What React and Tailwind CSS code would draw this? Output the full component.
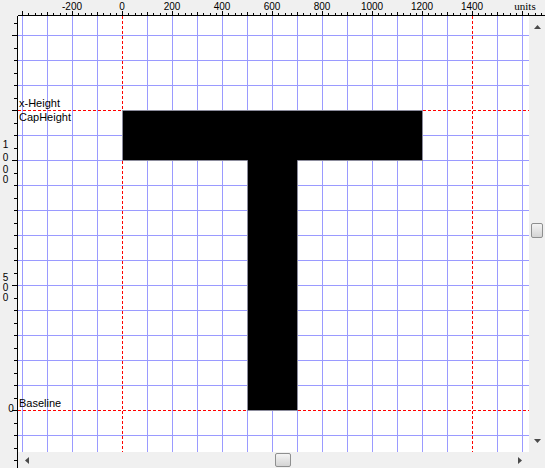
import React from 'react';

const GRID = '#9a9aff';
const RED = '#ff0000';

// units -> local px (canvas origin at page 18,16)
const ux = (u) => 104 + u / 4;
const uy = (u) => 394 - u / 4;

function TopRuler() {
    const ticks = [];
    for (let u = -400; u <= 1700; u += 25) {
        const x = Math.round(ux(u));
        if (x < 0 || x > 527) continue;
        const h = u % 200 === 0 ? 4 : u % 100 === 0 ? 3 : 2;
        ticks.push(<line key={u} x1={x + 0.5} x2={x + 0.5} y1={15} y2={15 - h} stroke="#000" />);
    }
    const labels = [];
    for (let u = -200; u <= 1400; u += 200) {
        labels.push(
            <text key={u} x={ux(u)} y={10} textAnchor="middle" fontSize="10" fontFamily="'Liberation Sans', Arial, sans-serif" fill="#000">
                {u}
            </text>
        );
    }
    return (
        <svg width="527" height="16" className="block">
            <line x1="0" x2="527" y1="15.5" y2="15.5" stroke="#000" />
            {ticks}
            {labels}
            <text x="507" y="10" textAnchor="middle" fontSize="11" fontFamily="'Liberation Serif', 'Times New Roman', serif" fill="#000">units</text>
        </svg>
    );
}

function LeftRuler() {
    const ticks = [];
    for (let k = -6; k <= 32; k++) {
        const u = k * 50;
        const y = Math.round(uy(u));
        if (y < 0 || y > 452) continue;
        const long = u % 500 === 0 || u === 1200;
        ticks.push(<line key={k} x1={long ? 12 : 14} x2={17} y1={y + 0.5} y2={y + 0.5} stroke="#000" />);
    }
    const digit = (ch, x, y, key) => (
        <text key={key} x={x} y={y} textAnchor="middle" fontSize="10" fontFamily="'Liberation Sans', Arial, sans-serif" fill="#000">{ch}</text>
    );
    return (
        <svg width="18" height="452" className="block">
            <line x1="17.5" x2="17.5" y1="0" y2="452" stroke="#000" />
            {ticks}
            {digit('1', 5.5, 131.5, 'a')}
            {digit('0', 5.5, 144.5, 'b')}
            {digit('0', 5.5, 156.5, 'c')}
            {digit('0', 5.5, 167, 'd')}
            {digit('5', 5.5, 264.5, 'e')}
            {digit('0', 5.5, 274.5, 'f')}
            {digit('0', 5.5, 284.5, 'g')}
            {digit('0', 11, 396, 'h')}
        </svg>
    );
}

function GlyphCanvas() {
    const vlines = [];
    for (let k = 0; k <= 20; k++) {
        const x = 4 + 25 * k;
        if (x === 104 || x === 454) continue;
        vlines.push(<line key={'v' + k} x1={x + 0.5} x2={x + 0.5} y1="0" y2="436" stroke={GRID} />);
    }
    const hlines = [];
    for (let k = 0; k <= 16; k++) {
        const y = 19 + 25 * k;
        if (y === 94 || y === 394) continue;
        hlines.push(<line key={'h' + k} x1="0" x2="511" y1={y + 0.5} y2={y + 0.5} stroke={GRID} />);
    }
    const label = { fontSize: 11, fontFamily: "'Liberation Sans', Arial, sans-serif", fill: '#000' };
    return (
        <svg width="511" height="436" className="block bg-white">
            {vlines}
            {hlines}
            <line x1="104.5" x2="104.5" y1="0" y2="436" stroke={RED} strokeDasharray="3 2" />
            <line x1="454.5" x2="454.5" y1="0" y2="436" stroke={RED} strokeDasharray="3 2" />
            <line x1="0" x2="511" y1="94.5" y2="94.5" stroke={RED} strokeDasharray="3 2" />
            <line x1="0" x2="511" y1="394.5" y2="394.5" stroke={RED} strokeDasharray="3 2" />
            <path d="M104.5 94.5 H404.5 V144.5 H279.5 V394.5 H229.5 V144.5 H104.5 Z" fill="#000" stroke="#8c8c9c" />
            <text x="1" y="91" {...label}>x-Height</text>
            <text x="1" y="105" {...label}>CapHeight</text>
            <text x="1" y="391" {...label}>Baseline</text>
        </svg>
    );
}

function Arrow({ dir }) {
    const pts = {
        up: '0,4 3.5,0 7,4',
        down: '0,0 3.5,4 7,0',
        left: '4,0 0,3.5 4,7',
        right: '0,0 4,3.5 0,7',
    }[dir];
    const vert = dir === 'up' || dir === 'down';
    return (
        <svg width={vert ? 7 : 4} height={vert ? 4 : 7} className="block">
            <polygon points={pts} fill="#4a4a4a" />
        </svg>
    );
}

function Thumb({ className }) {
    return <div className={`rounded-[2px] border border-[#8e8f8f] bg-gradient-to-b from-[#f4f4f4] to-[#d4d4d4] ${className}`} />;
}

export default function App() {
    return (
        <div className="grid w-[545px] h-[468px] grid-cols-[18px_511px_16px] grid-rows-[16px_436px_16px] bg-[#f0f0f0] overflow-hidden">
            <div className="bg-[#f0f0f0]" />
            <div className="col-span-2">
                <TopRuler />
            </div>
            <div className="row-span-2">
                <LeftRuler />
            </div>
            <GlyphCanvas />
            <div className="flex flex-col items-center justify-between bg-[#f0f0f0] py-[9px]">
                <Arrow dir="up" />
                <div className="flex-1 w-full flex flex-col items-center pt-[194px]">
                    <Thumb className="w-[12px] h-[15px]" />
                </div>
                <Arrow dir="down" />
            </div>
            <div className="flex items-center justify-between bg-[#f0f0f0] px-[7px]">
                <Arrow dir="left" />
                <div className="flex-1 h-full flex items-center pl-[246px]">
                    <Thumb className="w-[16px] h-[14px]" />
                </div>
                <Arrow dir="right" />
            </div>
            <div className="bg-[#f0f0f0]" />
        </div>
    );
}
